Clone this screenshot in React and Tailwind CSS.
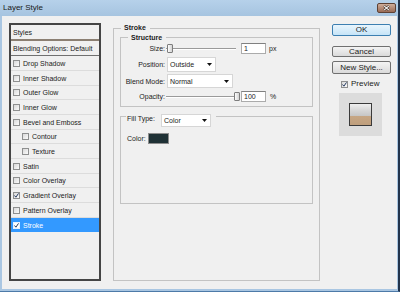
const rows = [
  { label: 'Drop Shadow', h: 'h-[15px]' },
  { label: 'Inner Shadow', h: 'h-[15px]' },
  { label: 'Outer Glow', h: 'h-[14px]' },
  { label: 'Inner Glow', h: 'h-[15px]' },
  { label: 'Bevel and Emboss', h: 'h-[15px]' },
  { label: 'Contour', h: 'h-[14px]', indent: true },
  { label: 'Texture', h: 'h-[15px]', indent: true },
  { label: 'Satin', h: 'h-[15px]' },
  { label: 'Color Overlay', h: 'h-[14px]' },
  { label: 'Gradient Overlay', h: 'h-[15px]', checked: true },
  { label: 'Pattern Overlay', h: 'h-[15px]' },
  { label: 'Stroke', h: 'h-[14px]', checked: true, selected: true },
];

const Check = ({ checked, light }) => (
  <span
    className={`flex h-[7px] w-[7px] shrink-0 items-center justify-center border ${
      light ? 'border-[#e8f2ff] bg-white' : 'border-[#8e8f8f] bg-gradient-to-br from-[#d9d9d9] to-[#fbfbfb]'
    }`}
  >
    {checked && (
      <svg width="5" height="5" viewBox="0 0 5 5">
        <path d="M0.5 2.5 L1.9 4.2 L4.5 0.4" fill="none" stroke="#21375e" strokeWidth="1" />
      </svg>
    )}
  </span>
);

const Arrow = () => (
  <svg width="5" height="3" viewBox="0 0 5 3" className="shrink-0">
    <path d="M0 0h5L2.5 3z" fill="#111" />
  </svg>
);

const Select = ({ value, className }) => (
  <div className={`flex items-center justify-between border border-[#d6d6d6] bg-white pl-[2px] pr-[3px] ${className}`}>
    <span>{value}</span>
    <Arrow />
  </div>
);

const Slider = ({ right }) => (
  <div className="relative ml-[1px] flex h-[11px] w-[70px] items-center">
    <div className="h-[2px] w-full border-t border-[#9a9a9a] bg-white" />
    <div
      className={`absolute top-[1px] h-[9px] w-[6px] rounded-[1px] border border-[#7d7d7d] bg-gradient-to-r from-[#fdfdfd] to-[#d3d3d3] ${
        right ? 'right-[-4px]' : 'left-[1px]'
      }`}
    />
  </div>
);

const NumBox = ({ value }) => (
  <div className="ml-[5px] flex h-[11px] w-[25px] items-center border border-[#ababab] border-t-[#808080] bg-white pl-[2px]">
    {value}
  </div>
);

export default function App() {
  return (
    <div className="flex h-[292px] w-[400px] flex-col border-b border-r-2 border-b-[#4d7aa8] border-r-[#22344c] bg-[#a9c6e2] font-['Liberation_Sans',Arial,sans-serif] text-[7px] leading-none text-[#1b1b1b]">
      {/* title bar */}
      <div className="flex h-[16px] shrink-0 items-center justify-between bg-gradient-to-b from-[#b6d1ea] to-[#a6c4e0] pl-[3px] pr-[2px]">
        <span className="text-[8px] text-[#1a1a1a]">Layer Style</span>
        <div className="flex h-[10px] w-[19px] items-center justify-center rounded-[2px] border border-[#5d4134] bg-gradient-to-b from-[#cfae9b] to-[#9a6b56]">
          <svg width="7" height="6" viewBox="0 0 7 6">
            <path d="M1 0.8 L6 5.2 M6 0.8 L1 5.2" stroke="#3b2a22" strokeWidth="2.2" />
            <path d="M1 0.8 L6 5.2 M6 0.8 L1 5.2" stroke="#fff" strokeWidth="1.1" />
          </svg>
        </div>
      </div>

      <div className="mb-[2px] ml-[2px] mr-[1px] flex flex-1 bg-[#f0f0f0] pl-[7px] pt-[7px]">
        {/* styles list */}
        <div className="flex h-[258px] w-[92px] shrink-0 flex-col border-2 border-[#454545]">
          <div className="flex h-[14px] items-center pl-[2px]">Styles</div>
          <div className="h-[2px] bg-[#8b7f72]" />
          <div className="flex h-[15px] items-center border-b border-[#707070] pl-[2px]">Blending Options: Default</div>
          {rows.map((r) => (
            <div
              key={r.label}
              className={`flex ${r.h} items-center gap-[3px] ${r.indent ? 'pl-[11px]' : 'pl-[2px]'} ${
                r.selected ? 'bg-[#3399ff] text-white' : 'border-b border-[#dcdcdc]'
              }`}
            >
              <Check checked={r.checked} light={r.selected} />
              <span>{r.label}</span>
            </div>
          ))}
        </div>

        {/* Stroke group */}
        <div className="ml-[12px] flex h-[258px] w-[207px] shrink-0 flex-col">
          <div className="flex h-[9px]">
            <div className="mt-[5px] w-[8px] border-l border-t border-[#c3c3c3]" />
            <span className="pl-[3px] pr-[4px] pt-[1px] font-bold">Stroke</span>
            <div className="mt-[5px] flex-1 border-r border-t border-[#c3c3c3]" />
          </div>
          <div className="flex flex-1 flex-col border-b border-l border-r border-[#c3c3c3] px-[6px]">
            {/* Structure */}
            <div className="flex h-[10px]">
              <div className="mt-[5px] w-[8px] border-l border-t border-[#c3c3c3]" />
              <span className="pl-[3px] pr-[4px] pt-[2px] font-bold">Structure</span>
              <div className="mt-[5px] flex-1 border-r border-t border-[#c3c3c3]" />
            </div>
            <div className="flex flex-col border-b border-l border-r border-[#c3c3c3] pb-[4px]">
              <div className="mt-[1px] flex h-[11px] items-center">
                <span className="w-[44px] text-right">Size:</span>
                <Slider />
                <NumBox value="1" />
                <span className="ml-[3px]">px</span>
              </div>
              <div className="mt-[3px] flex h-[15px] items-center">
                <span className="w-[44px] text-right">Position:</span>
                <Select value="Outside" className="ml-[2px] h-[15px] w-[49px]" />
              </div>
              <div className="mt-[2px] flex h-[14px] items-center">
                <span className="w-[44px] text-right">Blend Mode:</span>
                <Select value="Normal" className="ml-[2px] h-[14px] w-[66px]" />
              </div>
              <div className="mt-[3px] flex h-[11px] items-center">
                <span className="w-[44px] text-right">Opacity:</span>
                <Slider right />
                <NumBox value="100" />
                <span className="ml-[4px]">%</span>
              </div>
            </div>

            {/* Fill Type */}
            <div className="mt-[7px] flex h-[13px]">
              <div className="mt-[2px] w-[6px] border-l border-t border-[#c3c3c3]" />
              <span className="w-[35px] pl-[1px] pt-[1px]">Fill Type:</span>
              <Select value="Color" className="h-[13px] w-[50px]" />
              <div className="ml-[5px] mt-[2px] flex-1 border-r border-t border-[#c3c3c3]" />
            </div>
            <div className="h-[77px] border-b border-l border-r border-[#c3c3c3] pl-[6px]">
              <div className="mt-[6px] flex h-[11px] items-center">
                <span className="w-[21px]">Color:</span>
                <div className="h-[11px] w-[21px] border border-[#8c8c8c] bg-[#1f3135]" />
              </div>
            </div>
          </div>
        </div>

        {/* buttons */}
        <div className="ml-[12px] flex w-[59px] shrink-0 flex-col text-[8px]">
          <div className="mt-[1px] flex h-[12px] items-center justify-center rounded-[2px] border border-[#3c7fb1] bg-gradient-to-b from-[#e9f5fd] to-[#c6e4f7]">
            OK
          </div>
          <div className="mt-[10px] flex h-[11px] items-center justify-center rounded-[2px] border border-[#707070] bg-gradient-to-b from-[#f4f4f4] to-[#dadada]">
            Cancel
          </div>
          <div className="mt-[4px] flex h-[13px] items-center justify-center rounded-[2px] border border-[#707070] bg-gradient-to-b from-[#f4f4f4] to-[#dadada]">
            New Style...
          </div>
          <div className="ml-[9px] mt-[5px] flex h-[10px] items-center gap-[3px]">
            <Check checked />
            <span>Preview</span>
          </div>
          <div className="ml-[7px] mt-[4px] flex h-[43px] w-[43px] items-center justify-center bg-[#dcdcdc]">
            <div className="h-[23px] w-[23px] border border-[#3a3a3a] bg-[linear-gradient(#efefef_0%,#d8d8d8_28%,#c7c7c7_55%,#c6a684_58%,#bf9f7d_100%)]" />
          </div>
        </div>
      </div>
    </div>
  );
}
